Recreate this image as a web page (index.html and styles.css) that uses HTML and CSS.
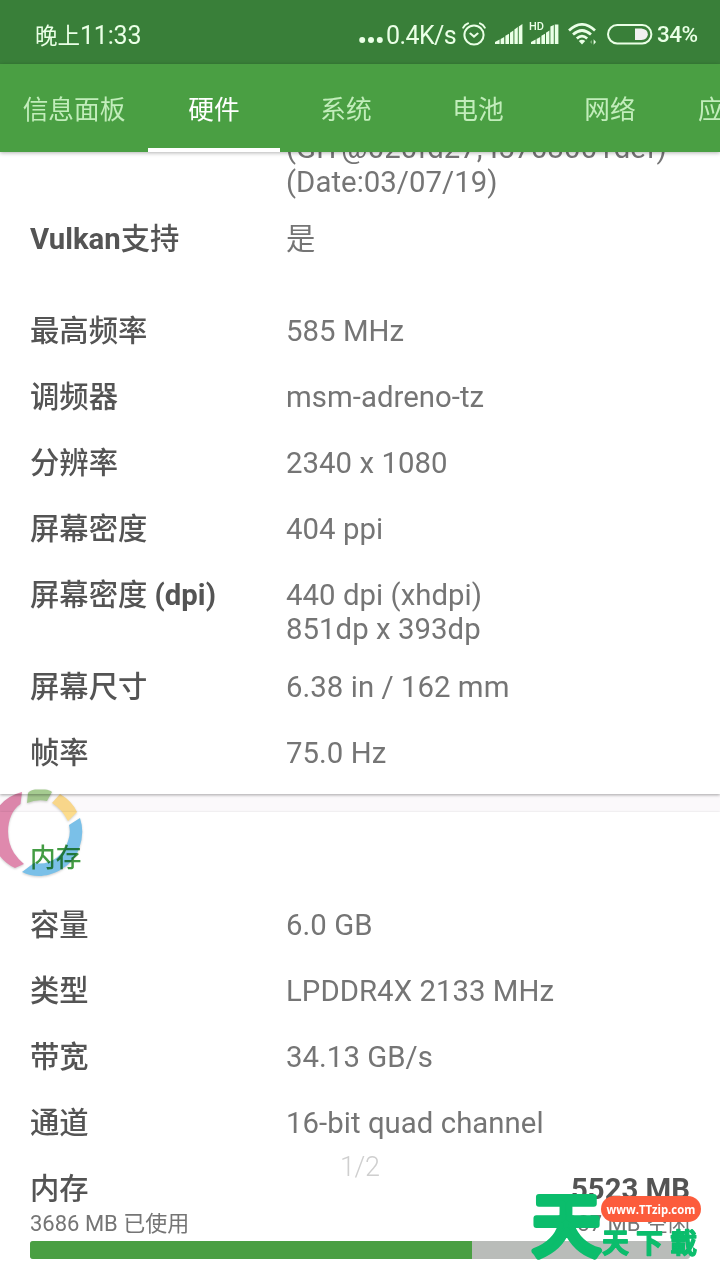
FILE: index.html
```html
<!DOCTYPE html>
<html lang="zh-CN">
<head>
<meta charset="utf-8">
<title>硬件</title>
<link rel="stylesheet" href="styles.css">
</head>
<body>
<div class="screen">
  <header class="statusbar">
    <span class="clock">晚上<span class="clock-digits">11:33</span></span>
    <div class="status-icons">
      <svg class="dots" width="24" height="8" viewBox="0 0 24 8" fill="#eaffe6"><circle cx="3.2" cy="4" r="3"/><circle cx="12" cy="4" r="3"/><circle cx="20.8" cy="4" r="3"/></svg>
      <span class="speed">0.4K/s</span>
      <svg class="alarm" width="24" height="24" viewBox="0 0 24 24" fill="none" stroke="#eaffe6" stroke-width="2" stroke-linecap="round"><circle cx="12" cy="13" r="9.6"/><path d="M1.2 5.6Q2.8 2.6 6 1.4M22.8 5.6Q21.2 2.6 18 1.4M8.4 11.6L12 14.6L15.6 11.6"/></svg>
      <svg class="signal" width="28" height="20" viewBox="0 0 28 20" fill="#eaffe6"><path d="M0 20V18L4.6 15.4V20ZM5.6 20V15L9.2 13V20ZM10.4 20V11.8L14 9.8V20ZM15 20V8.8L18.4 6.6V20ZM19.4 20V5.4L22.8 3V20ZM23.8 20V2.4L27.4 0V20Z"/></svg>
      <div class="signal-hd">
        <svg width="28" height="20" viewBox="0 0 28 20" fill="#eaffe6"><path d="M0 20V18L4.6 15.4V20ZM5.6 20V15L9.2 13V20ZM10.4 20V11.8L14 9.8V20ZM15 20V8.8L18.4 6.6V20ZM19.4 20V2.4L22.8 1V20ZM23.8 20V.4H27.4V20Z"/></svg>
        <span class="hd">HD</span>
      </div>
      <svg class="wifi" width="30" height="22" viewBox="0 0 30 22" fill="none" stroke="#eaffe6" stroke-width="2.7"><path d="M1 7.4Q14 -4.6 27 7.4M5 11.6Q14 3.4 23 11.6M8.8 15.4Q14 10.8 19.2 15.4"/><path fill="#eaffe6" stroke="none" d="M10.8 18Q14 15.4 17.2 18L14 21.4Z"/><path fill="#eaffe6" stroke="none" d="M25.6 16.200L28 19L25.600 21.800Z"/><path fill="#7cae76" stroke="none" d="M24 17V21L22 19Z"/></svg>
      <svg class="battery" width="46" height="21" viewBox="0 0 46 21"><rect x="1" y="1" width="43.4" height="18.4" rx="9.2" fill="none" stroke="#eaffe6" stroke-width="2"/><path fill="#f1f1f1" d="M28 4.4H34.4Q40.8 5.2 40.8 10.2T34.4 16H28Z"/></svg>
      <span class="percent">34%</span>
    </div>
  </header>
  <nav class="tabs">
    <span class="tab tab-first">信息面板</span>
    <span class="tab tab-active">硬件</span>
    <span class="tab">系统</span>
    <span class="tab">电池</span>
    <span class="tab">网络</span>
    <span class="tab tab-last">应用</span>
  </nav>
  <main class="content">
    <section class="card card-gpu">
      <div class="row row-version"><span class="label"></span><span class="value">(GIT@020fd27, I5703001def)<br>(Date:03/07/19)</span></div>
      <div class="row row-vulkan"><span class="label"><b>Vulkan</b>支持</span><span class="value">是</span></div>
      <div class="row"><span class="label">最高频率</span><span class="value">585 MHz</span></div>
      <div class="row"><span class="label">调频器</span><span class="value">msm-adreno-tz</span></div>
      <div class="row"><span class="label">分辨率</span><span class="value">2340 x 1080</span></div>
      <div class="row"><span class="label">屏幕密度</span><span class="value">404 ppi</span></div>
      <div class="row"><span class="label">屏幕密度 <b>(dpi)</b></span><span class="value">440 dpi (xhdpi)<br>851dp x 393dp</span></div>
      <div class="row"><span class="label">屏幕尺寸</span><span class="value">6.38 in / 162 mm</span></div>
      <div class="row"><span class="label">帧率</span><span class="value">75.0 Hz</span></div>
    </section>
    <section class="card card-memory">
      <h2 class="card-title">内存</h2>
      <div class="row"><span class="label">容量</span><span class="value">6.0 GB</span></div>
      <div class="row"><span class="label">类型</span><span class="value">LPDDR4X 2133 MHz</span></div>
      <div class="row"><span class="label">带宽</span><span class="value">34.13 GB/s</span></div>
      <div class="row"><span class="label">通道</span><span class="value">16-bit quad channel</span></div>
      <div class="usage-head"><span class="label">内存</span><b>5523 MB</b></div>
      <div class="usage-detail"><span>3686 MB 已使用</span><span>1837 MB 空闲</span></div>
      <div class="meter"><div class="meter-fill" style="width:67%"></div></div>
    </section>
  </main>
  <svg class="ring" width="90" height="96" viewBox="0 0 90 96">
    <path fill="#df89ad" d="M22 7L20.5 19C7 28 4 52 14 68Q18 74 24 79L15 83Q2 77 -6 62V28Q5 11 22 7Z"/>
    <path fill="#a5cb90" d="M27 18L28 8Q30 5 35 4.500H45Q50 5 52 7L47 16Q37 14 27 18Z"/>
    <path fill="#fcdc8c" d="M60 9Q72 16 77 27L68 36Q62 24 52 18Z"/>
    <path fill="#7ac0e8" d="M80 33Q85 48 79 64C71 83 52 91 39 91Q30 91 22 87L34 78C49 81 63 72 68 56Q71 48 69 40Z"/>
  </svg>
  <span class="pager">1/2</span>
  <div class="watermark">
    <svg class="mark" width="175" height="80" viewBox="0 0 175 80">
      <text class="mark-big" x="2" y="65.500">天</text>
      <text class="mark-small" x="72" y="68">天下載</text>
    </svg>
    <div class="mark-url"><span class="mark-url-text">www.TTzip.com</span></div>
  </div>
</div>
</body>
</html>
```
FILE: styles.css
```css
body {
  margin: 0;
  font-family: Roboto, "Noto Sans CJK SC", sans-serif;
}
.screen {
  position: relative;
  width: 720px;
  height: 1280px;
  overflow: hidden;
  background: #fbf9fb;
  display: flex;
  flex-direction: column;
}
.statusbar {
  flex: none;
  box-sizing: border-box;
  height: 64px;
  padding: 4px 23px 0 35px;
  display: flex;
  align-items: center;
  justify-content: space-between;
  background: #397f39;
  color: #eaffe6;
}
.clock {
  font-size: 22.5px;
}
.clock-digits {
  font-size: 25px;
  letter-spacing: -0.2px;
}
.status-icons {
  display: flex;
  align-items: center;
}
.dots { margin-top: 11px; }
.speed {
  margin-left: 3px;
  padding-top: 2px;
  width: 74px;
  font-size: 25px;
  letter-spacing: -0.6px;
  white-space: nowrap;
}
.alarm { margin-left: 2px; }
.signal { margin-left: 9px; }
.signal-hd {
  position: relative;
  display: flex;
  margin-left: 8px;
}
.hd {
  position: absolute;
  left: -2px;
  top: -3px;
  font-size: 11px;
  line-height: 11px;
  font-weight: 500;
  background: #397f39;
}
.wifi { margin-left: 9px; }
.battery { margin-left: 9px; }
.percent {
  width: 40px;
  margin-left: 4px;
  font-size: 22.5px;
  letter-spacing: -0.5px;
  font-weight: 500;
  white-space: nowrap;
}
.tabs {
  position: relative;
  z-index: 1;
  flex: none;
  height: 88px;
  display: flex;
  background: #4a9f43;
  box-shadow: 0 1px 4px rgba(0, 0, 0, 0.3);
  color: #c2edbb;
  font-size: 25.7px;
  line-height: 92px;
}
.tab {
  flex: none;
  box-sizing: border-box;
  width: 132px;
  text-align: center;
}
.tab-first { width: 148px; }
.tab-active {
  height: 88px;
  color: #fff;
  border-bottom: 4px solid #fff;
}
.tab-last {
  text-align: left;
  padding-left: 22px;
}
.content {
  flex: 1;
  min-height: 0;
  display: flex;
  flex-direction: column;
  gap: 18px;
}
.card {
  flex: none;
  background: #fff;
  box-shadow: 0 1px 3px rgba(0, 0, 0, 0.35);
}
.card-gpu {
  height: 642px;
}
.row {
  box-sizing: border-box;
  min-height: 66px;
  padding: 16px 30px 8px;
  display: grid;
  grid-template-columns: 256px 1fr;
  font-size: 29.33px;
  line-height: 34px;
}
.row-version {
  margin-top: -21px;
  height: 75px;
  padding-top: 0;
}
.row-vulkan { height: 92px; }
.label {
  color: #545454;
  font-weight: 500;
}
.value {
  color: #757575;
  letter-spacing: 0.05px;
}
.card-memory {
  height: 480px;
  box-shadow: 0 0 2px rgba(0, 0, 0, 0.12);
}
.card-title {
  margin: 0;
  padding: 29px 30px 17px;
  color: #439c43;
  font-size: 25.7px;
  line-height: 34px;
  font-weight: 500;
}
.usage-head {
  display: flex;
  justify-content: space-between;
  padding: 16px 30px 0;
  color: #545454;
  font-size: 29.33px;
  line-height: 34px;
}
.usage-detail {
  display: flex;
  justify-content: space-between;
  padding: 3px 30px 0;
  color: #757575;
  font-size: 22px;
  line-height: 30px;
}
.meter {
  height: 18px;
  margin: 2px 30px 0;
  border-radius: 3px;
  overflow: hidden;
  background: #b9bcb9;
}
.meter-fill {
  height: 18px;
  background: #4a9f43;
}
.ring {
  position: absolute;
  left: 0;
  top: 785px;
  filter: drop-shadow(0 1px 1px rgba(0, 0, 0, 0.2));
  mix-blend-mode: multiply;
}
.pager {
  position: absolute;
  left: 340px;
  top: 1150px;
  color: #cfcfcf;
  font-size: 27px;
  letter-spacing: -0.4px;
  font-weight: 300;
  line-height: 34px;
}
.watermark {
  position: absolute;
  left: 530px;
  top: 1185px;
  width: 175px;
  height: 80px;
}
.mark {
  display: block;
  fill: #0bbd6c;
  stroke: #0bbd6c;
  stroke-linejoin: round;
  font-family: "Noto Sans CJK TC", sans-serif;
}
.mark-big {
  font-size: 69px;
  font-weight: 500;
  stroke-width: 6px;
}
.mark-small {
  font-size: 27px;
  font-weight: 700;
  letter-spacing: 7px;
  stroke-width: 1.3px;
}
.mark-url {
  position: absolute;
  left: 71px;
  top: 11px;
  width: 100px;
  height: 26px;
  border-radius: 13px;
  background: #fc5c3c;
  color: #fff;
  display: flex;
  justify-content: center;
}
.mark-url-text {
  flex: none;
  font-family: "Open Sans", sans-serif;
  font-size: 13px;
  line-height: 27px;
  font-weight: 700;
  transform: scaleX(0.87);
}
```
